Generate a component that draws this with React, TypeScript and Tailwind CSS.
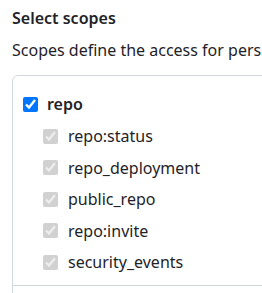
import React from "react";

const children = ["repo:status", "repo_deployment", "public_repo", "repo:invite", "security_events"];

export default function App() {
  return (
    <div
      className="w-[262px] h-[293px] overflow-hidden bg-white pl-[12px] text-[#1f2328]"
      style={{ fontFamily: '"Noto Sans", "Open Sans", sans-serif' }}
    >
      <h3 className="pt-[6px] text-[16px] leading-[24px] font-semibold whitespace-nowrap">Select scopes</h3>
      <p className="mt-[8px] text-[16px] leading-[24px] whitespace-nowrap">
        Scopes define the access for personal tokens.
      </p>
      <div className="mt-[13px] w-[320px] border border-[#d0d7de] rounded-[6px]">
        <div className="pt-[16px] pl-[10px] pb-[11px]">
          <label className="flex items-center h-[24px]">
            <input type="checkbox" defaultChecked className="w-[15px] h-[15px] m-0" />
            <span className="ml-[9px] text-[16px] font-semibold">repo</span>
          </label>
          <div className="pl-[20px] mt-[8px] flex flex-col gap-[7.5px]">
            {children.map((c) => (
              <label key={c} className="flex items-center h-[24px]">
                <input type="checkbox" defaultChecked disabled className="w-[15px] h-[15px] m-0" />
                <span className="ml-[10px] text-[16px]">{c}</span>
              </label>
            ))}
          </div>
        </div>
        <div className="border-t border-[#d0d7de] h-[40px]" />
      </div>
    </div>
  );
}
